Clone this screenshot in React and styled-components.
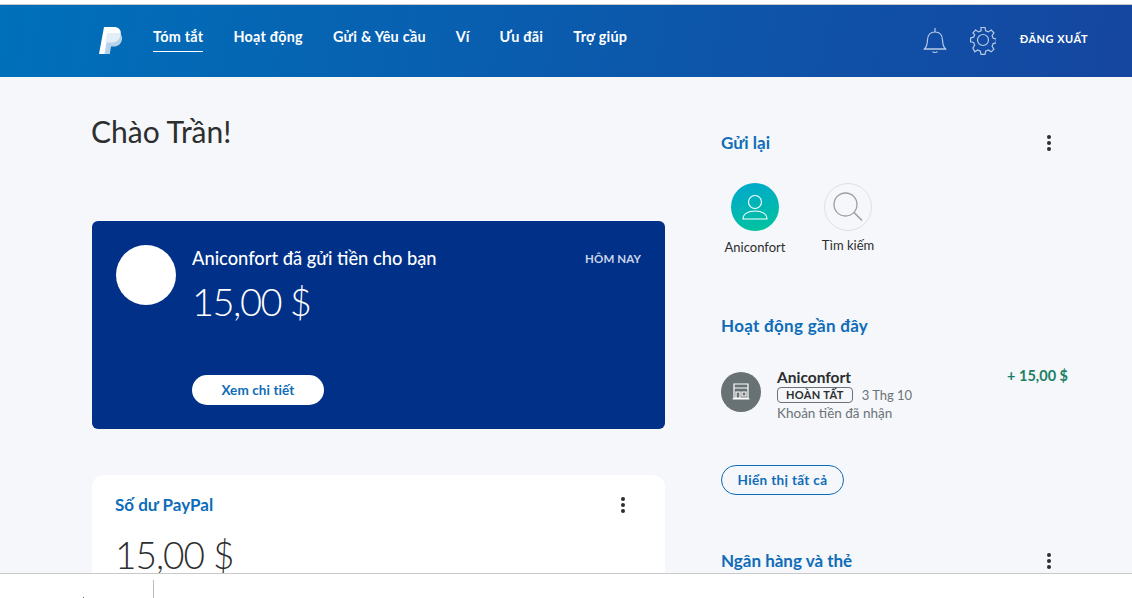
import React from "react";
import styled, { createGlobalStyle } from "styled-components";

const Global = createGlobalStyle`
  html, body { margin: 0; padding: 0; background: #fff; }
  body { font-family: Lato, "Noto Sans", "Liberation Sans", sans-serif; }
  * { box-sizing: border-box; }
`;
const Page = styled.div`
  width: 1132px; height: 598px; overflow: hidden;
  display: flex; flex-direction: column; background: #fff;
`;
const TopEdge = styled.div`
  height: 5px; flex: none; background: #fff; border-bottom: 1px solid #c9c9c9;
`;
const Header = styled.header`
  height: 72px; flex: none; display: flex; align-items: flex-start;
  background: linear-gradient(100deg, #0070ba 0%, #1546a0 100%);
  padding: 0 44px 0 98px; color: #fff;
`;
const Logo = styled.svg`
  width: 25px; height: 29px; margin-top: 21px; flex: none;
`;
const Nav = styled.nav`
  display: flex; gap: 30px; margin-left: 30px; margin-top: 21px;
`;
const NavItem = styled.a`
  font-size: 14.4px; font-weight: 700; line-height: 22px; padding-bottom: 3px;
  letter-spacing: 0.25px; color: #fff;
  border-bottom: 1px solid ${p => (p.$active ? "#fff" : "transparent")};
`;
const HeaderRight = styled.div`
  margin-left: auto; display: flex; align-items: center; margin-top: 18px;
`;
const IconBtn = styled.svg`
  width: ${p => p.$w}px; height: 30px; margin-right: ${p => p.$mr}px; margin-top: 2px;
  fill: none; stroke: #b9cbe6; stroke-width: 1.2;
`;
const Logout = styled.a`
  font-size: 11px; font-weight: 700; letter-spacing: 0.5px; color: #fff; padding-bottom: 2px;
`;
const Main = styled.main`
  flex: 1; min-height: 0; overflow: hidden; background: #f5f7fa;
  display: flex; padding-left: 92px;
`;
const LeftCol = styled.section`
  width: 573px; flex: none; padding-top: 32px;
`;
const Title = styled.h1`
  margin: 0 0 0 -1px; font-size: 30px; font-weight: 400; line-height: 44px; color: #2c2e2f;
`;
const Hero = styled.div`
  margin-top: 68px; height: 208px; border-radius: 6px; background: #003087; color: #fff;
  padding: 24px; display: flex; position: relative;
`;
const Avatar = styled.div`
  width: 60px; height: 60px; border-radius: 50%; background: #fff; flex: none;
`;
const HeroBody = styled.div`
  margin-left: 16px; display: flex; flex-direction: column; flex: 1; align-items: flex-start;
`;
const HeroTop = styled.div`
  display: flex; justify-content: space-between; align-items: center; align-self: stretch; height: 26px;
`;
const HeroTitle = styled.div`
  font-size: 18.3px; font-weight: 500; line-height: 25px;
`;
const Today = styled.div`
  font-size: 11.5px; font-weight: 700; letter-spacing: 0.1px; color: #cbd5ea;
`;
const HeroAmount = styled.div`
  margin-top: 5px; font-size: 38px; font-weight: 300; line-height: 50px; letter-spacing: -1.5px;
`;
const HeroButton = styled.button`
  margin-top: 49px; width: 132px; height: 30px; border: 0; border-radius: 15px; background: #fff;
  color: #0e6cb8; font: 700 13.5px Lato, "Noto Sans", sans-serif; letter-spacing: 0.1px;
`;
const BalanceCard = styled.div`
  margin-top: 46px; height: 200px; background: #fff; border-radius: 12px 12px 0 0;
  padding: 18px 23px;
`;
const CardHead = styled.div`
  display: flex; justify-content: space-between; align-items: center; padding-right: 16px;
`;
const SectionTitle = styled.h2`
  margin: 0; font-size: 17px; font-weight: 700; line-height: 24px; color: #0e6cb8;
  letter-spacing: ${p => p.$track || 0}px;
`;
const Dots = styled.svg`
  width: 6px; height: 18px; fill: #2c2e2f; flex: none;
`;
const Balance = styled.div`
  margin-top: 13px; font-size: 37px; font-weight: 300; line-height: 50px; letter-spacing: -1px; color: #2c2e2f;
`;
const RightCol = styled.aside`
  width: 347px; margin-left: 56px; flex: none; padding-top: 54px;
`;
const RightHead = styled.div`
  display: flex; justify-content: space-between; align-items: center; padding-right: 16px;
`;
const Contacts = styled.div`
  display: flex; margin-top: 28px; align-items: flex-start;
`;
const Contact = styled.div`
  width: ${p => p.$w}px; display: flex; flex-direction: column; align-items: center;
  margin-right: ${p => p.$mr || 0}px;
`;
const ContactCircle = styled.div`
  width: 48px; height: 48px; border-radius: 50%; display: flex; align-items: center; justify-content: center;
  background: ${p => (p.$search ? "transparent" : "linear-gradient(165deg, #00a7cf, #00c59a)")};
  border: ${p => (p.$search ? "1px solid #dfe1e4" : "0")};
`;
const ContactName = styled.div`
  margin-top: ${p => p.$mt}px; font-size: 13px; line-height: 18px; color: #2c2e2f; white-space: nowrap;
`;
const ActivityHead = styled(SectionTitle)`
  margin-top: 58px;
`;
const ActivityRow = styled.div`
  display: flex; margin-top: 29px; align-items: flex-start;
`;
const Merchant = styled.div`
  width: 40px; height: 40px; border-radius: 50%; background: #687173; flex: none; margin-top: 5px;
  display: flex; align-items: center; justify-content: center;
`;
const ActivityBody = styled.div`
  margin-left: 16px; flex: 1;
`;
const ActivityName = styled.div`
  font-size: 15.5px; font-weight: 700; line-height: 20px; color: #2c2e2f;
`;
const Meta = styled.div`
  display: flex; align-items: center; gap: 9px; font-size: 13px; line-height: 16px; color: #6c7378;
`;
const Badge = styled.span`
  border: 1px solid #6c7378; border-radius: 4px; height: 16px; line-height: 14px;
  padding: 0 8px; font-size: 11px; font-weight: 700; color: #2c2e2f; letter-spacing: 0.35px;
`;
const Note = styled.div`
  margin-top: 1px; font-size: 13.5px; line-height: 18px; color: #6c7378;
`;
const Amount = styled.div`
  font-size: 14.5px; font-weight: 700; line-height: 18px; color: #1a7f64;
`;
const Outline = styled.button`
  display: block; margin-top: 43px; width: 123px; height: 30px; border: 1px solid #0e6cb8; border-radius: 15px;
  background: transparent; color: #0e6cb8; font: 700 13.5px Lato, "Noto Sans", sans-serif; letter-spacing: 0.35px;
`;
const BankHead = styled(RightHead)`
  margin-top: 54px;
`;
const Bottom = styled.footer`
  height: 25px; flex: none; background: #fff; border-top: 1px solid #c9c9c9;
  display: flex; align-items: flex-end; padding-left: 83px;
`;
const Tick = styled.div`
  width: 1px; height: 1px; background: #555;
`;
const Divider = styled.div`
  width: 1px; height: 18px; background: #bdbdbd; margin-left: 69px;
`;

const MoreDots = () => (
  <Dots viewBox="0 0 6 18">
    <circle cx="3" cy="3" r="2" />
    <circle cx="3" cy="9" r="2" />
    <circle cx="3" cy="15" r="2" />
  </Dots>
);

export default function App() {
  return (
    <Page>
      <Global />
      <TopEdge />
      <Header>
        <Logo viewBox="0 0 25 29">
          <path d="M6 1h9.500c5 0 8 2.600 7.200 7.400C22 13.500 18.500 16.500 13.500 16.500H10L8 28H1Z" fill="#fff" />
          <path d="M9 7h11c3 .6 4.500 3 4 6.500-.8 4.500-4 7-8.500 7H13l-1.200 7.500H6.500L9 13Z" fill="#b6d2ea" />
          <path d="M9 7h13.500c.2.500.2 1 .1 1.400C22 13.500 18.500 16.500 13.500 16.500H7.500Z" fill="#e3eef8" />
        </Logo>
        <Nav>
          <NavItem $active>Tóm tắt</NavItem>
          <NavItem>Hoạt động</NavItem>
          <NavItem>Gửi &amp; Yêu cầu</NavItem>
          <NavItem>Ví</NavItem>
          <NavItem>Ưu đãi</NavItem>
          <NavItem>Trợ giúp</NavItem>
        </Nav>
        <HeaderRight>
          <IconBtn $w={24} $mr={23} viewBox="0 0 24 30">
            <path d="M1.500 24c2.500-2.500 2.800-4.500 3-9 .2-5 3-8 7.500-8s7.300 3 7.500 8c.2 4.500.5 6.500 3 9Z" />
            <path d="M1 24h22M12 3v4M9.500 26.500c1 1.300 4 1.300 5 0" />
          </IconBtn>
          <IconBtn $w={26} $mr={24} viewBox="0 0 26 30">
            <circle cx="13" cy="15" r="5.500" />
            <path d="M11 2.500h4l.7 3.300 2.600 1.100 2.900-1.800 2.700 2.800-1.800 2.800 1.100 2.600 3 .7v3.900l-3 .7-1.100 2.600 1.800 2.900-2.700 2.700-2.900-1.800-2.600 1.100-.7 3.300h-4l-.7-3.300-2.600-1.100-2.900 1.800L2.900 23l1.800-2.900-1.100-2.600-3-.7v-3.900l3-.7 1.100-2.600L2.900 7.900l2.700-2.800 2.900 1.800 2.600-1.100Z" />
          </IconBtn>
          <Logout>ĐĂNG XUẤT</Logout>
        </HeaderRight>
      </Header>
      <Main>
        <LeftCol>
          <Title>Chào Trần!</Title>
          <Hero>
            <Avatar />
            <HeroBody>
              <HeroTop>
                <HeroTitle>Aniconfort đã gửi tiền cho bạn</HeroTitle>
                <Today>HÔM NAY</Today>
              </HeroTop>
              <HeroAmount>15,00 $</HeroAmount>
              <HeroButton>Xem chi tiết</HeroButton>
            </HeroBody>
          </Hero>
          <BalanceCard>
            <CardHead>
              <SectionTitle>Số dư PayPal</SectionTitle>
              <MoreDots />
            </CardHead>
            <Balance>15,00 $</Balance>
          </BalanceCard>
        </LeftCol>
        <RightCol>
          <RightHead>
            <SectionTitle>Gửi lại</SectionTitle>
            <MoreDots />
          </RightHead>
          <Contacts>
            <Contact $w={68} $mr={32}>
              <ContactCircle>
                <svg width="26" height="26" viewBox="0 0 26 26" fill="none" stroke="#fff" strokeWidth="1.100">
                  <circle cx="13" cy="8" r="6.500" />
                  <path d="M1 25c0-5 5-8 12-8s12 3 12 8Z" />
                </svg>
              </ContactCircle>
              <ContactName $mt={7}>Aniconfort</ContactName>
            </Contact>
            <Contact $w={54}>
              <ContactCircle $search>
                <svg width="32" height="32" viewBox="0 0 32 32" fill="none" stroke="#9a9ea3" strokeWidth="1.300">
                  <circle cx="13.500" cy="13.500" r="11.500" />
                  <path d="M22 21.500l8 8" strokeWidth="1.600" />
                </svg>
              </ContactCircle>
              <ContactName $mt={5}>Tìm kiếm</ContactName>
            </Contact>
          </Contacts>
          <ActivityHead $track={0.3}>Hoạt động gần đây</ActivityHead>
          <ActivityRow>
            <Merchant>
              <svg width="18" height="18" viewBox="0 0 18 18" fill="none" stroke="#fff" strokeWidth="1.200">
                <path d="M2 1h14v4H2ZM2 5v10h14V5M0.500 16h17M4 15V9h4v6M10 9h4v4h-4Z" />
              </svg>
            </Merchant>
            <ActivityBody>
              <ActivityName>Aniconfort</ActivityName>
              <Meta>
                <Badge>HOÀN TẤT</Badge>
                3 Thg 10
              </Meta>
              <Note>Khoản tiền đã nhận</Note>
            </ActivityBody>
            <Amount>+ 15,00 $</Amount>
          </ActivityRow>
          <Outline>Hiển thị tất cả</Outline>
          <BankHead>
            <SectionTitle>Ngân hàng và thẻ</SectionTitle>
            <MoreDots />
          </BankHead>
        </RightCol>
      </Main>
      <Bottom>
        <Tick />
        <Divider />
      </Bottom>
    </Page>
  );
}
